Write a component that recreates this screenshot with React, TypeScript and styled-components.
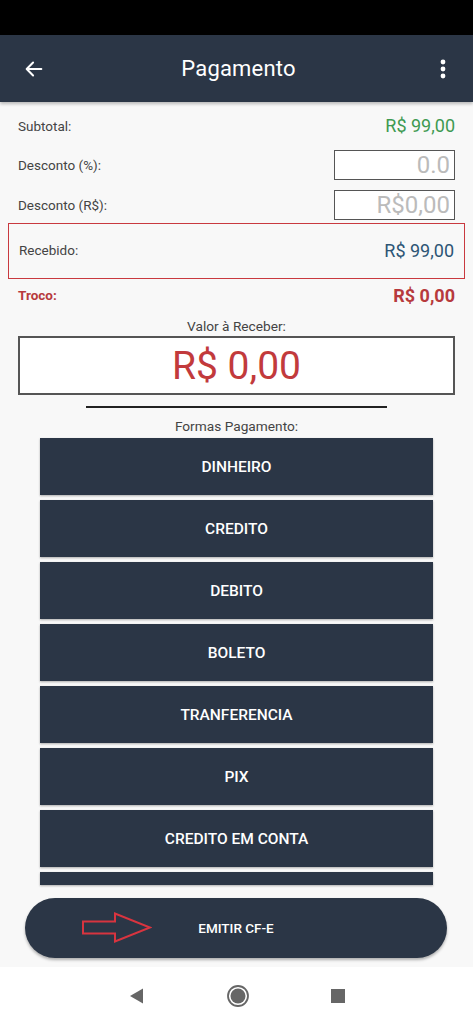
import React from "react";
import styled, { createGlobalStyle } from "styled-components";

const GlobalStyle = createGlobalStyle`
  html, body {
    margin: 0;
    padding: 0;
    background: #f8f8f8;
    font-family: Roboto, "Liberation Sans", sans-serif;
  }
`;

const DARK = "#2b3646";

const paymentMethods = [
  "DINHEIRO",
  "CREDITO",
  "DEBITO",
  "BOLETO",
  "TRANFERENCIA",
  "PIX",
  "CREDITO EM CONTA",
];

export default function App() {
  return (
    <Screen>
      <GlobalStyle />
      <StatusBar />
      <AppBar>
        <IconButton aria-label="Voltar">
          <svg width="22" height="22" viewBox="0 0 24 24">
            <path
              d="M20 12H5M11 5l-7 7 7 7"
              fill="none"
              stroke="#fff"
              strokeWidth="2.2"
              strokeLinecap="round"
              strokeLinejoin="round"
            />
          </svg>
        </IconButton>
        <Title>Pagamento</Title>
        <IconButton aria-label="Menu">
          <svg width="8" height="22" viewBox="0 0 8 22">
            <circle cx="4" cy="4" r="2.4" fill="#fff" />
            <circle cx="4" cy="11" r="2.4" fill="#fff" />
            <circle cx="4" cy="18" r="2.4" fill="#fff" />
          </svg>
        </IconButton>
      </AppBar>

      <Content>
        <Summary>
          <Row>
            <Label>Subtotal:</Label>
            <Value color="#3e9a52">R$ 99,00</Value>
          </Row>
          <Row>
            <Label>Desconto (%):</Label>
            <InputBox>0.0</InputBox>
          </Row>
          <Row>
            <Label>Desconto (R$):</Label>
            <InputBox>R$0,00</InputBox>
          </Row>
        </Summary>

        <Highlight>
          <Label>Recebido:</Label>
          <Value color="#2d5575">R$ 99,00</Value>
        </Highlight>

        <TrocoRow>
          <TrocoLabel>Troco:</TrocoLabel>
          <TrocoValue>R$ 0,00</TrocoValue>
        </TrocoRow>

        <Caption $gap={7}>Valor à Receber:</Caption>
        <AmountBox>R$ 0,00</AmountBox>
        <Divider />
        <Caption $gap={0}>Formas Pagamento:</Caption>

        <MethodList>
          {paymentMethods.map((m) => (
            <MethodButton key={m}>{m}</MethodButton>
          ))}
          <MethodButton $partial />
        </MethodList>

        <EmitButton>
          <ArrowMark width="70" height="32" viewBox="0 0 70 32">
            <path
              d="M1 9.5H33V1.5L68 15.5L33 29.5V21.5H1Z"
              fill="none"
              stroke="#d8343f"
              strokeWidth="2"
              strokeLinejoin="miter"
            />
          </ArrowMark>
          EMITIR CF-E
        </EmitButton>
      </Content>

      <NavBar>
        <svg width="18" height="18" viewBox="0 0 18 18">
          <path d="M15 1.5V16.5L2 9Z" fill="#666" />
        </svg>
        <svg width="24" height="24" viewBox="0 0 24 24">
          <circle cx="12" cy="12" r="10" fill="none" stroke="#666" strokeWidth="1.8" />
          <circle cx="12" cy="12" r="7.5" fill="#666" />
        </svg>
        <svg width="16" height="16" viewBox="0 0 16 16">
          <rect x="1" y="1" width="14" height="14" fill="#666" />
        </svg>
      </NavBar>
    </Screen>
  );
}

const Screen = styled.div`
  width: 473px;
  height: 1024px;
  display: flex;
  flex-direction: column;
  background: #f8f8f8;
  overflow: hidden;
`;

const StatusBar = styled.div`
  height: 35px;
  background: #000;
  flex-shrink: 0;
`;

const AppBar = styled.header`
  height: 67px;
  flex-shrink: 0;
  background: ${DARK};
  display: flex;
  align-items: center;
  justify-content: space-between;
  padding: 0 18px 0 22px;
  box-shadow: 0 2px 3px rgba(0, 0, 0, 0.25);
  position: relative;
  z-index: 1;
`;

const IconButton = styled.div`
  display: flex;
  align-items: center;
  justify-content: center;
  width: 24px;
  height: 24px;
`;

const Title = styled.h1`
  margin: 0;
  font-size: 22px;
  font-weight: 400;
  color: #fff;
  letter-spacing: 0.2px;
`;

const Content = styled.main`
  flex: 1;
  display: flex;
  flex-direction: column;
  padding: 0 18px;
`;

const Summary = styled.div`
  display: flex;
  flex-direction: column;
  padding-top: 11px;
  gap: 9px;
`;

const Row = styled.div`
  display: flex;
  align-items: center;
  justify-content: space-between;
  min-height: 31px;
  &:first-child {
    min-height: 25px;
    margin-bottom: 2px;
  }
`;

const Label = styled.span`
  font-size: 13.5px;
  color: #444;
`;

const Value = styled.span<{ color: string }>`
  font-size: 18px;
  color: ${(p) => p.color};
`;

const InputBox = styled.div`
  width: 115px;
  height: 28px;
  border: 1.5px solid #555;
  background: #fff;
  color: #bbb;
  font-size: 24px;
  text-align: right;
  padding: 0 4px 0 0;
  line-height: 28px;
  box-sizing: content-box;
`;

const Highlight = styled.div`
  margin: 3px -10px 0;
  height: 56px;
  border: 1.5px solid #c9393f;
  display: flex;
  align-items: center;
  justify-content: space-between;
  padding: 0 10px 2px;
  box-sizing: border-box;
`;

const TrocoRow = styled.div`
  display: flex;
  align-items: center;
  justify-content: space-between;
  height: 32px;
`;

const TrocoLabel = styled.span`
  font-size: 13.5px;
  font-weight: 700;
  color: #b73a3d;
`;

const TrocoValue = styled.span`
  font-size: 18px;
  font-weight: 700;
  color: #b73a3d;
`;

const Caption = styled.div<{ $gap: number }>`
  margin-top: ${(p) => p.$gap}px;
  text-align: center;
  font-size: 13.7px;
  color: #444;
  line-height: 17px;
`;

const AmountBox = styled.div`
  margin-top: 1px;
  height: 55px;
  border: 2px solid #555;
  background: #fff;
  display: flex;
  align-items: center;
  justify-content: center;
  font-size: 39px;
  color: #c23a3c;
`;

const Divider = styled.div`
  align-self: center;
  width: 301px;
  height: 2px;
  background: #222;
  margin: 11px 0 10px;
`;

const MethodList = styled.div`
  display: flex;
  flex-direction: column;
  gap: 5px;
  padding: 3px 22px 0;
`;

const MethodButton = styled.div<{ $partial?: boolean }>`
  flex-shrink: 0;
  height: ${(p) => (p.$partial ? "13px" : "57px")};
  background: ${DARK};
  color: #fff;
  font-size: 15.5px;
  font-weight: 500;
  display: flex;
  align-items: center;
  justify-content: center;
  box-shadow: 0 1px 2px rgba(0, 0, 0, 0.3);
`;

const EmitButton = styled.div`
  margin: 13px 8px 0 7px;
  height: 60px;
  border-radius: 30px;
  background: ${DARK};
  color: #fff;
  font-size: 13.5px;
  font-weight: 500;
  display: flex;
  align-items: center;
  justify-content: center;
  box-shadow: 0 2px 3px rgba(0, 0, 0, 0.3);
  position: relative;
`;

const ArrowMark = styled.svg`
  position: absolute;
  left: 57px;
  top: 14px;
`;

const NavBar = styled.nav`
  height: 57px;
  flex-shrink: 0;
  background: #fff;
  display: flex;
  align-items: center;
  justify-content: center;
  gap: 80px;
  margin-top: 9px;
  padding-bottom: 2px;
`;
